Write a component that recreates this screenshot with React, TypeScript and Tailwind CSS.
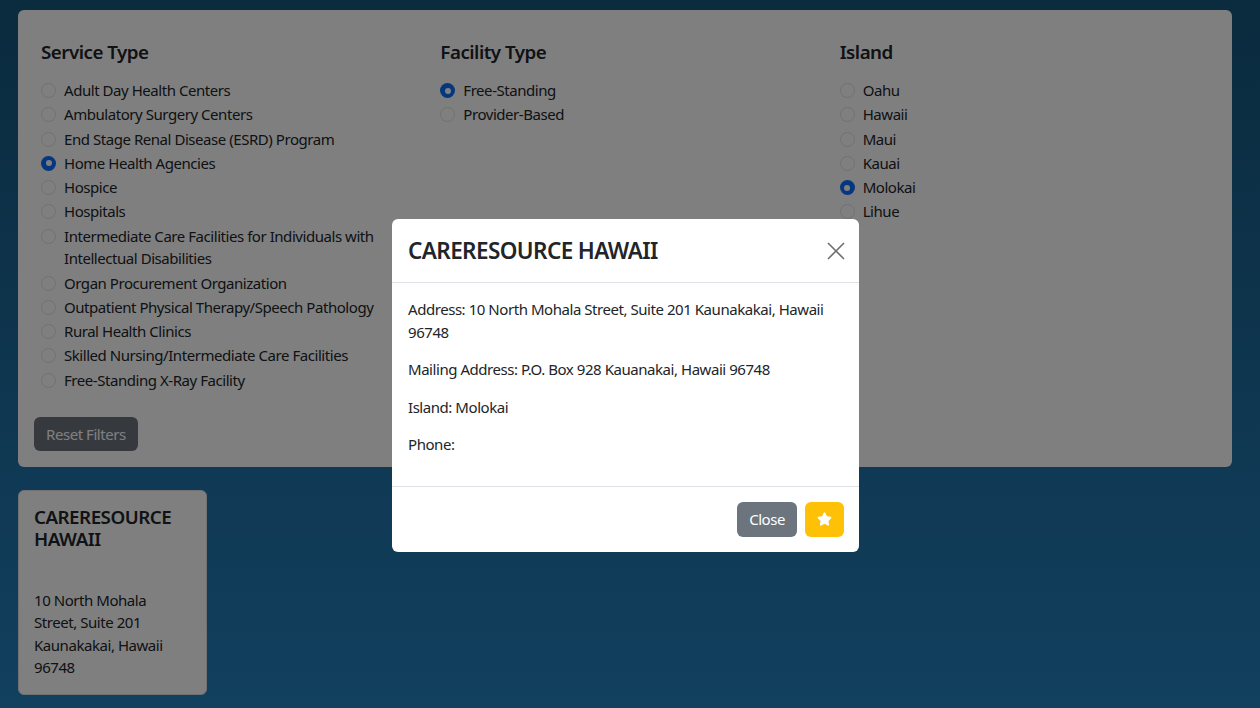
import { useState } from 'react';

const serviceTypes = [
	'Adult Day Health Centers',
	'Ambulatory Surgery Centers',
	'End Stage Renal Disease (ESRD) Program',
	'Home Health Agencies',
	'Hospice',
	'Hospitals',
	'Intermediate Care Facilities for Individuals with Intellectual Disabilities',
	'Organ Procurement Organization',
	'Outpatient Physical Therapy/Speech Pathology',
	'Rural Health Clinics',
	'Skilled Nursing/Intermediate Care Facilities',
	'Free-Standing X-Ray Facility',
];

const facilityTypes = ['Free-Standing', 'Provider-Based'];
const islands = ['Oahu', 'Hawaii', 'Maui', 'Kauai', 'Molokai', 'Lihue'];

type RadioGroupProps = {
	title: string;
	name: string;
	options: string[];
	value: string;
	onChange: (value: string) => void;
};

function RadioGroup({ title, name, options, value, onChange }: RadioGroupProps) {
	return (
		<div className="flex flex-col">
			<h5 className="mb-[15.5px] text-[18.75px] leading-[22.5px] font-semibold tracking-[-0.5px]">{title}</h5>
			<div className="flex flex-col gap-y-[1.8px]">
				{options.map((option) => {
					const checked = option === value;
					return (
						<label key={option} className="flex cursor-pointer items-start gap-[8px] leading-[22.5px]">
							<input
								type="radio"
								name={name}
								checked={checked}
								onChange={() => {
									onChange(option);
								}}
								className="sr-only"
							/>
							{checked ? (
								<span className="mt-[4px] flex h-[15px] w-[15px] shrink-0 items-center justify-center rounded-full bg-[#0d6efd]">
									<span className="h-[6px] w-[6px] rounded-full bg-white" />
								</span>
							) : (
								<span className="mt-[4px] h-[15px] w-[15px] shrink-0 rounded-full border border-[#dee2e6] bg-white" />
							)}
							<span>{option}</span>
						</label>
					);
				})}
			</div>
		</div>
	);
}

function StarIcon() {
	return (
		<svg viewBox="0 0 576 512" className="h-[14px] w-[15px] fill-white" aria-hidden="true">
			<path d="M316.9 18C311.6 7 300.4 0 288.1 0s-23.4 7-28.8 18L195 150.3 51.4 171.5c-12 1.8-22 10.2-25.7 21.7s-.7 24.2 7.9 32.7L137.8 329 113.2 474.7c-2 12 3 24.2 12.9 31.3s23 8 33.8 2.3l128.3-68.5 128.3 68.5c10.8 5.7 23.9 4.900 33.8-2.3s14.9-19.3 12.9-31.3L438.5 329 542.7 225.9c8.6-8.5 11.7-21.2 7.900-32.7s-13.7-19.900-25.7-21.7L381.2 150.3 316.9 18z" />
		</svg>
	);
}

export default function App() {
	const [service, setService] = useState('Home Health Agencies');
	const [facility, setFacility] = useState('Free-Standing');
	const [island, setIsland] = useState('Molokai');
	const [open, setOpen] = useState(true);

	return (
		<div className="min-h-screen bg-[linear-gradient(180deg,#16567c_0%,#2480be_100%)] pt-[10px] pr-[28px] pb-[14px] pl-[18px] font-['Noto_Sans',sans-serif] text-[15px] tracking-[-0.45px] text-[#212529]">
			<div className="rounded-[6px] bg-white pt-[31px] pr-[23px] pb-[16px] pl-[16px]">
				<div className="grid grid-cols-3 gap-x-[30px] pl-[7px]">
					<RadioGroup title="Service Type" name="service" options={serviceTypes} value={service} onChange={setService} />
					<RadioGroup title="Facility Type" name="facility" options={facilityTypes} value={facility} onChange={setFacility} />
					<RadioGroup title="Island" name="island" options={islands} value={island} onChange={setIsland} />
				</div>
				<button
					type="button"
					className="mt-[25.5px] rounded-[6px] bg-[#6c757d] px-[12px] py-[6px] leading-[22.5px] text-white"
				>
					Reset Filters
				</button>
			</div>

			<div className="mt-[23px] w-[189px] rounded-[6px] border border-[#dee2e6] bg-white p-[15px]">
				<h5 className="mb-[39.5px] text-[18.75px] leading-[21.5px] font-semibold tracking-[-0.5px]">CARERESOURCE HAWAII</h5>
				<p className="leading-[22.5px]">10 North Mohala Street, Suite 201 Kaunakakai, Hawaii 96748</p>
			</div>

			{open && (
				<div className="fixed inset-0 z-50 bg-black/50">
					<div role="dialog" aria-modal="true" className="mt-[219px] ml-[392px] w-[467px] rounded-[6px] bg-white">
						<div className="flex items-center justify-between border-b border-[#dee2e6] px-[16px] py-[18px]">
							<h4 className="text-[22.5px] leading-[27px] font-semibold tracking-[-0.6px]">CARERESOURCE HAWAII</h4>
							<button
								type="button"
								aria-label="Close"
								onClick={() => {
									setOpen(false);
								}}
								className="mr-[-2px] text-[#6f6f6f]"
							>
								<svg viewBox="0 0 18 18" className="h-[18px] w-[18px]" aria-hidden="true">
									<path d="M1 1L17 17M17 1L1 17" stroke="currentColor" strokeWidth="1.6" fill="none" />
								</svg>
							</button>
						</div>
						<div className="px-[16px] pt-[15px] pb-[15px] leading-[22.5px]">
							<p className="mb-[15px]">Address: 10 North Mohala Street, Suite 201 Kaunakakai, Hawaii 96748</p>
							<p className="mb-[15px]">Mailing Address: P.O. Box 928 Kauanakai, Hawaii 96748</p>
							<p className="mb-[15px]">Island: Molokai</p>
							<p className="mb-[15px]">Phone: </p>
						</div>
						<div className="flex justify-end gap-[8px] border-t border-[#dee2e6] px-[15px] py-[15px]">
							<button
								type="button"
								onClick={() => {
									setOpen(false);
								}}
								className="h-[35px] rounded-[6px] bg-[#6c757d] px-[12px] leading-[22.5px] text-white"
							>
								Close
							</button>
							<button
								type="button"
								aria-label="Favorite"
								className="flex h-[35px] w-[39px] items-center justify-center rounded-[6px] bg-[#ffc107]"
							>
								<StarIcon />
							</button>
						</div>
					</div>
				</div>
			)}
		</div>
	);
}
